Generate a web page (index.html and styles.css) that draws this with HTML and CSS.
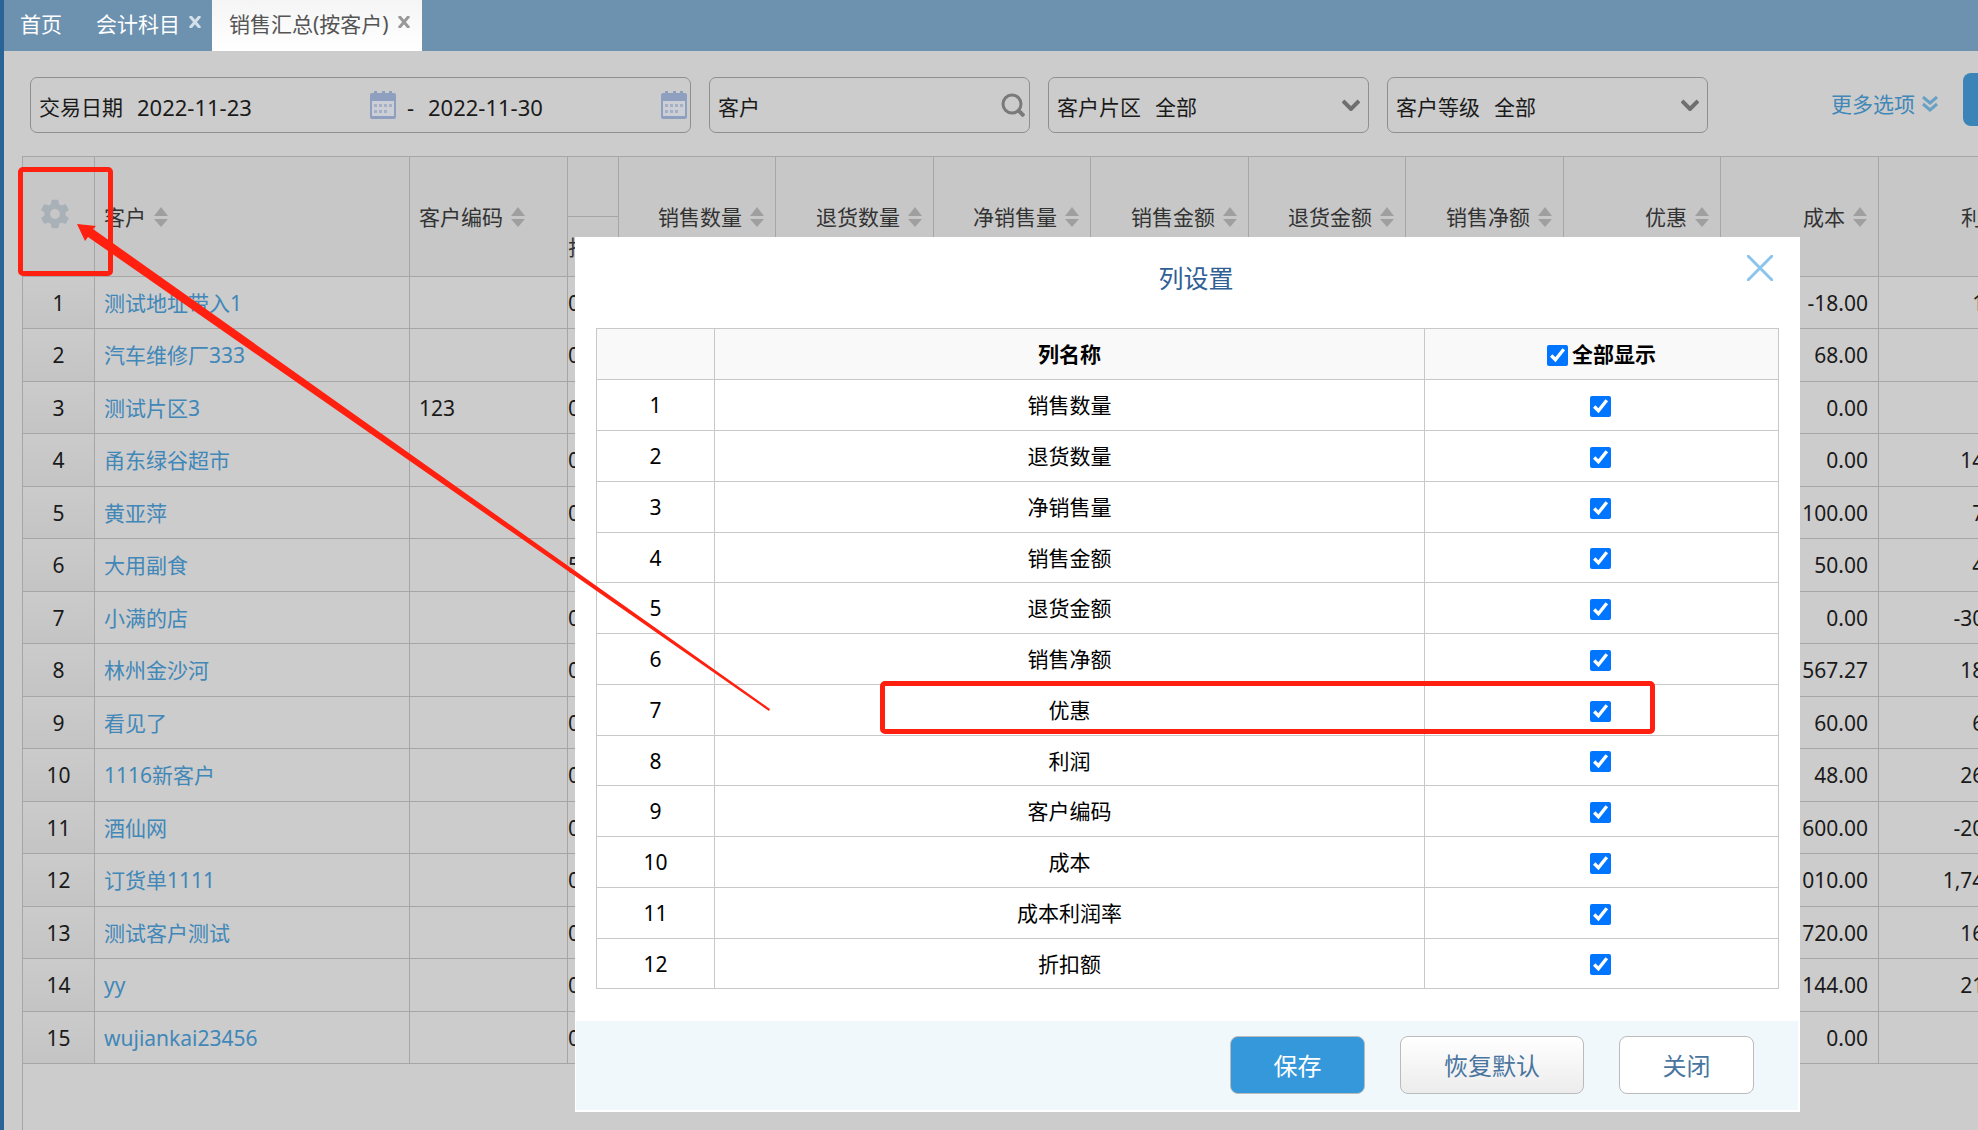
FILE: index.html
```html
<!DOCTYPE html>
<html lang="zh-CN">
<head>
<meta charset="utf-8">
<meta name="viewport" content="width=device-width, initial-scale=1">
<title>销售汇总(按客户)</title>
<link rel="stylesheet" href="styles.css">
</head>
<body>
<svg class="defs" aria-hidden="true">
  <symbol id="sort" viewBox="0 0 16 20"><path d="M8 0 15 9H1zM8 20 1 12h14z"/></symbol>
  <symbol id="cal" viewBox="0 0 26 28"><path fill="#8f9fbf" d="M2 2h2V0h3v2h5V0h3v2h4V0h3v2h2q2 0 2 2v22q0 2-2 2H2q-2 0-2-2V4q0-2 2-2z"/><path fill="#ccd0d6" d="M2 10h22v15H2z"/><path fill="#a5b0c6" d="M4 13h3v3H4zm5 0h3v3H9zm5 0h3v3h-3zm5 0h3v3h-3zM4 19h3v3H4zm5 0h3v3H9zm5 0h3v3h-3z"/></symbol>
</svg>
<div class="app">
  <nav class="tabs">
    <a class="tab" href="#home">首页</a>
    <div class="tab tab-account"><a href="#account">会计科目</a><button class="tab-close" aria-label="关闭会计科目"><svg width="14" height="12" viewBox="0 0 14 12"><path d="M2 0 12 12M12 0 2 12"/></svg></button></div>
    <div class="tab tab-active"><a href="#sales">销售汇总(按客户)</a><button class="tab-close" aria-label="关闭销售汇总"><svg width="14" height="12" viewBox="0 0 14 12"><path d="M2 0 12 12M12 0 2 12"/></svg></button></div>
  </nav>

  <form class="toolbar">
    <div class="field field-date">
      <label for="from">交易日期</label>
      <input id="from" type="text" value="2022-11-23">
      <svg class="cal" width="26" height="28"><use href="#cal"/></svg>
      <span class="dash">-</span>
      <input id="to" type="text" value="2022-11-30" aria-label="结束日期">
      <svg class="cal" width="26" height="28"><use href="#cal"/></svg>
    </div>
    <div class="field">
      <label for="customer">客户</label>
      <input id="customer" type="text">
      <svg width="24" height="24" viewBox="0 0 24 24" fill="none" stroke="#7a7a7a"><circle cx="11" cy="11" r="9" stroke-width="3"/><path d="m17 17 6 6" stroke-width="4"/></svg>
    </div>
    <div class="field field-select">
      <label for="area">客户片区</label>
      <select id="area"><option>全部</option></select>
      <svg width="18" height="12" viewBox="0 0 18 12"><path d="m1 2 8 8 8-8"/></svg>
    </div>
    <div class="field field-select">
      <label for="level">客户等级</label>
      <select id="level"><option>全部</option></select>
      <svg width="18" height="12" viewBox="0 0 18 12"><path d="m1 2 8 8 8-8"/></svg>
    </div>
    <a class="more" href="#more">更多选项<svg width="16" height="16" viewBox="0 0 16 16"><path d="m1 1 7 6 7-6M1 8l7 6 7-6"/></svg></a>
    <button class="query" type="button" aria-label="查询"></button>
  </form>

  <main class="sheet">
    <table class="grid">
      <colgroup><col class="c-72"><col class="c-315"><col class="c-158"><col class="c-51"><col class="c-157"><col class="c-158"><col class="c-157"><col class="c-158"><col class="c-157"><col class="c-158"><col class="c-157"><col class="c-158"><col class="c-158"></colgroup>
      <thead>
        <tr>
          <th rowspan="2" class="num"><button class="gear" aria-label="列设置"><svg width="34" height="34" viewBox="0 0 24 24"><path d="M19.4 13a7.800 7.800 0 0 0 0-2l2.100-1.650a.5.500 0 0 0 .12-.64l-2-3.460a.5.500 0 0 0-.61-.22l-2.490 1a7.300 7.300 0 0 0-1.690-.98l-.38-2.650A.49.490 0 0 0 14 2h-4a.49.490 0 0 0-.49.420l-.38 2.650c-.61.250-1.170.590-1.690.980l-2.490-1a.49.490 0 0 0-.61.220l-2 3.460a.49.490 0 0 0 .12.640L4.570 11a7.900 7.900 0 0 0 0 2l-2.110 1.650a.5.500 0 0 0-.12.640l2 3.460c.12.220.39.300.61.220l2.490-1c.52.400 1.080.730 1.690.980l.38 2.650c.03.240.240.420.49.420h4c.25 0 .46-.18.490-.42l.38-2.650c.61-.25 1.170-.59 1.690-.98l2.490 1c.23.090.49 0 .61-.22l2-3.460a.5.500 0 0 0-.12-.64zM12 15.500a3.500 3.500 0 1 1 0-7 3.500 3.500 0 0 1 0 7z"/></svg></button></th>
          <th rowspan="2"><span class="head">客户<svg><use href="#sort"/></svg></span></th>
          <th rowspan="2"><span class="head">客户编码<svg><use href="#sort"/></svg></span></th>
          <th class="group"></th>
          <th rowspan="2"><span class="head right">销售数量<svg><use href="#sort"/></svg></span></th>
          <th rowspan="2"><span class="head right">退货数量<svg><use href="#sort"/></svg></span></th>
          <th rowspan="2"><span class="head right">净销售量<svg><use href="#sort"/></svg></span></th>
          <th rowspan="2"><span class="head right">销售金额<svg><use href="#sort"/></svg></span></th>
          <th rowspan="2"><span class="head right">退货金额<svg><use href="#sort"/></svg></span></th>
          <th rowspan="2"><span class="head right">销售净额<svg><use href="#sort"/></svg></span></th>
          <th rowspan="2"><span class="head right">优惠<svg><use href="#sort"/></svg></span></th>
          <th rowspan="2"><span class="head right">成本<svg><use href="#sort"/></svg></span></th>
          <th rowspan="2"><span class="head right">利润<svg><use href="#sort"/></svg></span></th>
        </tr>
        <tr><th class="tight">折扣</th></tr>
      </thead>
      <tbody>
        <tr><td class="num">1</td><td><a href="#c1">测试地址带入1</a></td><td></td><td class="tight">0</td><td colspan="7"></td><td class="val">-18.00</td><td class="val">18.00</td></tr>
        <tr><td class="num">2</td><td><a href="#c2">汽车维修厂333</a></td><td></td><td class="tight">0</td><td colspan="7"></td><td class="val">68.00</td><td class="val">0.00</td></tr>
        <tr><td class="num">3</td><td><a href="#c3">测试片区3</a></td><td>123</td><td class="tight">0</td><td colspan="7"></td><td class="val">0.00</td><td class="val">0.00</td></tr>
        <tr><td class="num">4</td><td><a href="#c4">甬东绿谷超市</a></td><td></td><td class="tight">0</td><td colspan="7"></td><td class="val">0.00</td><td class="val">140.00</td></tr>
        <tr><td class="num">5</td><td><a href="#c5">黄亚萍</a></td><td></td><td class="tight">0</td><td colspan="7"></td><td class="val">100.00</td><td class="val">70.00</td></tr>
        <tr><td class="num">6</td><td><a href="#c6">大用副食</a></td><td></td><td class="tight">5</td><td colspan="7"></td><td class="val">50.00</td><td class="val">40.00</td></tr>
        <tr><td class="num">7</td><td><a href="#c7">小满的店</a></td><td></td><td class="tight">0</td><td colspan="7"></td><td class="val">0.00</td><td class="val">-300.00</td></tr>
        <tr><td class="num">8</td><td><a href="#c8">林州金沙河</a></td><td></td><td class="tight">0</td><td colspan="7"></td><td class="val">567.27</td><td class="val">180.00</td></tr>
        <tr><td class="num">9</td><td><a href="#c9">看见了</a></td><td></td><td class="tight">0</td><td colspan="7"></td><td class="val">60.00</td><td class="val">60.00</td></tr>
        <tr><td class="num">10</td><td><a href="#c10">1116新客户</a></td><td></td><td class="tight">0</td><td colspan="7"></td><td class="val">48.00</td><td class="val">260.00</td></tr>
        <tr><td class="num">11</td><td><a href="#c11">酒仙网</a></td><td></td><td class="tight">0</td><td colspan="7"></td><td class="val">600.00</td><td class="val">-200.00</td></tr>
        <tr><td class="num">12</td><td><a href="#c12">订货单1111</a></td><td></td><td class="tight">0</td><td colspan="7"></td><td class="val">010.00</td><td class="val">1,740.00</td></tr>
        <tr><td class="num">13</td><td><a href="#c13">测试客户测试</a></td><td></td><td class="tight">0</td><td colspan="7"></td><td class="val">720.00</td><td class="val">160.00</td></tr>
        <tr><td class="num">14</td><td><a href="#c14">yy</a></td><td></td><td class="tight">0</td><td colspan="7"></td><td class="val">144.00</td><td class="val">210.00</td></tr>
        <tr><td class="num">15</td><td><a href="#c15">wujiankai23456</a></td><td></td><td class="tight">0</td><td colspan="7"></td><td class="val">0.00</td><td class="val">0.00</td></tr>
      </tbody>
    </table>
  </main>
</div>

<section class="dialog" role="dialog" aria-labelledby="dialog-title">
  <header class="dialog-head">
    <h2 id="dialog-title">列设置</h2>
    <button class="dialog-close" aria-label="关闭"><svg width="26" height="26" viewBox="0 0 26 26"><path d="m0 0 26 26M26 0 0 26"/></svg></button>
  </header>
  <div class="dialog-body">
    <table class="columns">
      <colgroup><col class="k-num"><col class="k-name"><col class="k-show"></colgroup>
      <thead><tr><th></th><th>列名称</th><th><label class="all"><input type="checkbox" checked>全部显示</label></th></tr></thead>
      <tbody>
        <tr><td>1</td><td>销售数量</td><td><input type="checkbox" checked aria-label="销售数量"></td></tr>
        <tr><td>2</td><td>退货数量</td><td><input type="checkbox" checked aria-label="退货数量"></td></tr>
        <tr><td>3</td><td>净销售量</td><td><input type="checkbox" checked aria-label="净销售量"></td></tr>
        <tr><td>4</td><td>销售金额</td><td><input type="checkbox" checked aria-label="销售金额"></td></tr>
        <tr><td>5</td><td>退货金额</td><td><input type="checkbox" checked aria-label="退货金额"></td></tr>
        <tr><td>6</td><td>销售净额</td><td><input type="checkbox" checked aria-label="销售净额"></td></tr>
        <tr><td>7</td><td>优惠</td><td><input type="checkbox" checked aria-label="优惠"></td></tr>
        <tr><td>8</td><td>利润</td><td><input type="checkbox" checked aria-label="利润"></td></tr>
        <tr><td>9</td><td>客户编码</td><td><input type="checkbox" checked aria-label="客户编码"></td></tr>
        <tr><td>10</td><td>成本</td><td><input type="checkbox" checked aria-label="成本"></td></tr>
        <tr><td>11</td><td>成本利润率</td><td><input type="checkbox" checked aria-label="成本利润率"></td></tr>
        <tr><td>12</td><td>折扣额</td><td><input type="checkbox" checked aria-label="折扣额"></td></tr>
      </tbody>
    </table>
  </div>
  <footer class="dialog-foot">
    <button class="btn btn-primary">保存</button>
    <button class="btn btn-reset">恢复默认</button>
    <button class="btn">关闭</button>
  </footer>
</section>

<div class="mark mark-gear"></div>
<div class="mark mark-row"></div>
<svg class="arrow" width="700" height="500" viewBox="77 224 700 500" aria-hidden="true"><path d="M77 224 96 226 93 229 770 709 769 711 88 237 85 241z"/></svg>
</body>
</html>
```
FILE: styles.css
```css
* { box-sizing: border-box; }

body {
  margin: 0;
  overflow: hidden;
  position: relative;
  font-family: "Noto Sans", "Noto Sans CJK SC", sans-serif;
  font-size: 21px;
  line-height: 28px;
  color: #1a1a1a;
  background: #ccc;
}

a { color: inherit; text-decoration: none; }
button, input, select { font: inherit; color: inherit; margin: 0; }
button { cursor: pointer; }
svg { display: block; flex: none; }
.defs { position: absolute; width: 0; height: 0; }

.app {
  display: flex;
  flex-direction: column;
  min-height: 100vh;
  border-left: 4px solid #2a6496;
}

/* Tabs */
.tabs { display: flex; height: 51px; background: #6d92b0; color: #fff; }
.tab { display: flex; align-items: center; gap: 8px; padding: 0 10px 4px 16px; white-space: nowrap; }
.tab-account { padding-left: 24px; }
.tab-active { padding: 0 11px 4px 17px; color: #555; background: linear-gradient(#f5f5f5, #fff); }
.tab-close { padding: 0 0 4px; border: 0; background: none; }
.tab-close path { fill: none; stroke: #d5e0e9; stroke-width: 3; }
.tab-active .tab-close path { stroke: #999; }

/* Filters */
.toolbar { display: flex; gap: 18px; padding: 26px 0 23px 26px; overflow: hidden; }
.field {
  display: flex;
  align-items: center;
  flex: 0 0 321px;
  min-width: 0;
  width: 321px;
  height: 56px;
  padding: 4px 4px 0 8px;
  border: 1px solid #8f8f8f;
  border-radius: 7px;
}
.field-date { flex-basis: 661px; padding-right: 3px; font-size: 22px; }
.field label { flex: none; font-size: 21px; }
.field input { flex: 1 1 0; width: 0; min-width: 0; height: 36px; margin-left: 14px; padding: 0; border: 0; outline: 0; background: none; }
.dash { width: 18px; text-align: right; }
.field svg { margin-bottom: 4px; }
.field select { flex: 1; min-width: 0; height: 36px; margin-left: 14px; padding: 0; border: 0; background: none; appearance: none; }
.field-select { padding-right: 8px; }
.field-select path { fill: none; stroke: #6f6f6f; stroke-width: 4; }
.more { display: flex; align-items: center; gap: 7px; flex: none; height: 54px; margin-left: 105px; color: #4187b8; }
.more path { fill: none; stroke: #68a0c6; stroke-width: 3; }
.query { flex: 0 0 130px; height: 53px; margin: -4px 0 0 7px; border: 0; border-radius: 8px; background: #3b84b8; }

/* Report grid */
.sheet { flex: 1; margin-left: 18px; border: solid #a6a6a6; border-width: 1px 0 0 1px; }
.grid { table-layout: fixed; width: 2013px; border-collapse: separate; border-spacing: 0; }
.c-51 { width: 51px; }
.c-72 { width: 72px; }
.c-157 { width: 157px; }
.c-158 { width: 158px; }
.c-315 { width: 315px; }
.grid th, .grid td {
  padding: 0 10px 0 9px;
  border: solid #a6a6a6;
  border-width: 0 1px 1px 0;
  text-align: left;
  font-weight: 400;
  white-space: nowrap;
}
.grid th { height: 60px; color: #333; background: #c7c7c7; }
.grid td { height: 52px; }
.grid tbody tr:nth-child(even) td { height: 53px; }
.grid .num { padding: 0; text-align: center; }
.grid th.num { padding-right: 8px; }
.grid td.num { background: linear-gradient(#cbcbcb, #c4c4c4); }
.grid .val { text-align: right; }
.grid .tight { padding: 0; overflow: hidden; }
.grid a { color: #4187b8; }
.head { display: flex; align-items: center; gap: 7px; }
.head.right { justify-content: flex-end; }
.head svg { width: 16px; height: 20px; fill: #9f9f9f; }
.gear { padding: 0 0 6px; border: 0; background: none; }
.gear path { fill: #a8b0b8; }

/* Column settings dialog */
.dialog {
  position: absolute;
  top: 237px;
  left: 575px;
  width: 1225px;
  padding: 0 2px 2px 1px;
  background: #fff;
  color: #000;
}
.dialog-head { display: flex; align-items: center; height: 91px; padding: 0 25px 9px 69px; }
.dialog-head h2 { flex: 1; margin: 0; text-align: center; font-size: 25px; line-height: 36px; font-weight: 400; color: #2f5f95; }
.dialog-close { padding: 0 0 20px; border: 0; background: none; }
.dialog-close path { fill: none; stroke: #8cc5eb; stroke-width: 3; }
.dialog-body { padding: 0 19px 32px 20px; }
.columns { table-layout: fixed; width: 100%; border-collapse: separate; border-spacing: 0; border: solid #c8c8c8; border-width: 1px 0 0 1px; }
.k-num { width: 118px; }
.k-show { width: 354px; }
.columns th, .columns td { height: 51px; padding: 0; border: solid #c8c8c8; border-width: 0 1px 1px 0; text-align: center; }
.columns tbody tr:nth-child(4n) td { height: 50px; }
.columns th { background: #f9f9f9; font-weight: 700; }
.columns td:last-child { padding-right: 2px; }
.columns input { display: block; width: 21px; height: 21px; margin: 2px auto 0; }
.all { display: flex; justify-content: center; align-items: center; gap: 4px; }
.all input { margin: 2px 0 0; }
.dialog-foot { display: flex; justify-content: flex-end; gap: 35px; padding: 15px 44px 16px; background: #f0f8fb; }
.btn { width: 135px; height: 58px; padding: 2px 0 0; border: 1px solid #bbb; border-radius: 8px; background: #fff; color: #49759f; font-size: 24px; }
.btn-reset { width: 184px; background: linear-gradient(#fff, #ececec); }
.btn-primary { background: #3498db; color: #fff; }

/* Annotations over the page */
.mark { position: absolute; border: 5px solid #ff2010; border-radius: 5px; pointer-events: none; }
.mark-gear { top: 167px; left: 18px; width: 95px; height: 109px; }
.mark-row { top: 681px; left: 880px; width: 775px; height: 53px; }
.arrow { position: absolute; top: 224px; left: 77px; fill: #ff2010; pointer-events: none; }
```
